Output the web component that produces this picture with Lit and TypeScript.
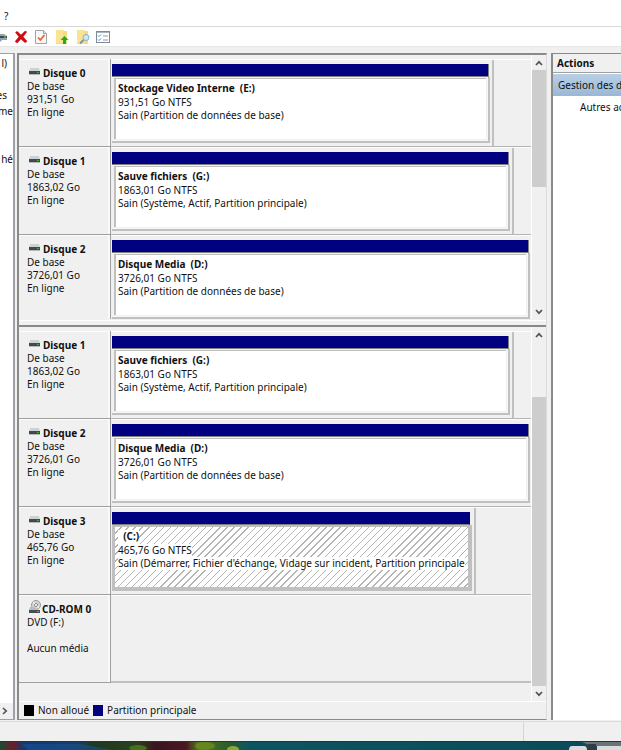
import { LitElement, html, css, svg, nothing } from "lit";
import { customElement, property } from "lit/decorators.js";

interface Disk {
  name: string;
  kind: string;
  size: string;
  state: string;
  optical?: boolean;
  /** share of the graph area taken by the disk, in percent */
  share?: number;
  volume?: string;
  volumeSize?: string;
  health?: string;
  selected?: boolean;
}

const DISKS: Disk[] = [
  { name: "Disque 0", kind: "De base", size: "931,51 Go", state: "En ligne", share: 91.2, volume: "Stockage Video Interne\u00a0 (E:)", volumeSize: "931,51 Go NTFS", health: "Sain (Partition de données de base)" },
  { name: "Disque 1", kind: "De base", size: "1863,02 Go", state: "En ligne", share: 96, volume: "Sauve fichiers\u00a0 (G:)", volumeSize: "1863,01 Go NTFS", health: "Sain (Système, Actif, Partition principale)" },
  { name: "Disque 2", kind: "De base", size: "3726,01 Go", state: "En ligne", share: 100.7, volume: "Disque Media\u00a0 (D:)", volumeSize: "3726,01 Go NTFS", health: "Sain (Partition de données de base)" },
  { name: "Disque 3", kind: "De base", size: "465,76 Go", state: "En ligne", share: 86.9, volume: "\u00a0 (C:)", volumeSize: "465,76 Go NTFS", health: "Sain (Démarrer, Fichier d'échange, Vidage sur incident, Partition principale", selected: true },
  { name: "CD-ROM 0", kind: "DVD (F:)", size: "", state: "Aucun média", optical: true },
];

const driveIcon = (optical: boolean) => svg`
  <svg class="drive" width="13" height="16" viewBox="0 0 13 16" aria-hidden="true">
    ${optical
      ? svg`<circle cx="8" cy="5" r="4.5" fill="#d6d6d6" stroke="#9a9a9a"/><circle cx="8" cy="5" r="1.6" fill="#f4f4f4" stroke="#8a8a8a"/><path d="M5 2.2 7 4M9.2 6.2l2 1.6" stroke="#fff"/>
        <path d="M2 7h4l5 3H1z" fill="#b9bcbe"/><rect x="1" y="10" width="11" height="3" fill="#4a4d50"/><rect x="9" y="11" width="2" height="1" fill="#27d03c"/>`
      : svg`<path d="M2 4h9l1 3H1z" fill="#cfd1d3"/><rect x="1" y="7" width="11" height="3" fill="#45484b"/><rect x="1" y="10" width="11" height="1" fill="#b5b8ba"/><rect x="9" y="8" width="2" height="1" fill="#27c03c"/>`}
  </svg>`;

@customElement("disk-row")
class DiskRow extends LitElement {
  @property({ attribute: false }) disk!: Disk;

  static styles = css`
    :host {
      display: flex;
      flex: none;
      height: 88px;
      line-height: 13px;
    }
    .label {
      flex: none;
      box-sizing: border-box;
      width: 92px;
      padding: 6px 0 0 8px;
      border-right: 1px solid #a0a0a0;
      border-bottom: 1px solid #a0a0a0;
      box-shadow: inset -2px 0 #fafafa, inset 0 1px #fcfcfc;
    }
    .name {
      display: flex;
      align-items: flex-end;
      gap: 2px;
      height: 15px;
      font-weight: bold;
      line-height: 14px;
    }
    .drive {
      flex: none;
      margin-left: 1px;
    }
    .optical .name {
      gap: 1px;
    }
    .line {
      min-height: 13px;
    }
    .graph {
      flex: 1;
      min-width: 0;
      box-sizing: border-box;
      border-top: 1px solid #fcfcfc;
      border-bottom: 1px solid #b4b4b4;
      overflow: hidden;
    }
    .graph.empty {
      border-bottom: 2px solid #c0c0c0;
    }
    .frame {
      box-sizing: border-box;
      display: flex;
      flex-direction: column;
      height: 100%;
      padding: 4px 2px 3px 1px;
      border-right: 2px solid #c0c0c0;
    }
    .bar {
      flex: none;
      height: 12px;
      margin-right: 1px;
      background: #000080;
      border-right: 1px solid #808080;
      border-bottom: 1px solid #808080;
    }
    .volume {
      flex: 1;
      min-height: 0;
      display: flex;
      border: solid #c0c0c0;
      border-width: 0 2px 2px 0;
      padding: 1px 2px 2px 2px;
      box-shadow: inset -1px -1px #f7f7f7;
    }
    .body {
      flex: 1;
      min-width: 0;
      background: #fff;
      border: solid #c0c0c0;
      border-width: 1px 0 0 2px;
      padding: 3px 0 0 2px;
      white-space: nowrap;
      overflow: hidden;
    }
    .body .line {
      width: fit-content;
      height: 13px;
    }
    .body .title {
      font-weight: bold;
      height: 14px;
    }
    .selected .bar {
      border-right-color: #000080;
      margin-right: 2px;
    }
    .selected .volume {
      background: #c0c0c0;
      box-shadow: none;
      padding-top: 2px;
    }
    .selected .body {
      border-width: 0 0 0 1px;
      padding-left: 3px;
      background: #fff repeating-linear-gradient(135deg, #fff 0 4px, #b4b4b4 4px 5px);
    }
    .selected .line {
      background: #fff;
    }
  `;

  render() {
    const d = this.disk;
    return html`
      <div class="label ${d.optical ? "optical" : ""}">
        <div class="name">${driveIcon(!!d.optical)}<span>${d.name}</span></div>
        <div class="line">${d.kind}</div>
        <div class="line">${d.size}</div>
        <div class="line">${d.state}</div>
      </div>
      <div class="graph ${d.volume ? "" : "empty"}">
        ${d.volume
          ? html`<div class="frame ${d.selected ? "selected" : ""}" style="width:${d.share}%">
              <div class="bar"></div>
              <div class="volume">
                <div class="body">
                  <div class="line title">${d.volume}</div>
                  <div class="line">${d.volumeSize}</div>
                  <div class="line">${d.health}</div>
                </div>
              </div>
            </div>`
          : nothing}
      </div>
    `;
  }
}

@customElement("scroll-rail")
class ScrollRail extends LitElement {
  /** thumb start and end, in percent of the track */
  @property({ type: Number }) from = 0;
  @property({ type: Number }) to = 100;

  static styles = css`
    :host {
      flex: none;
      display: flex;
      flex-direction: column;
      width: 14px;
      background: #f0f0f0;
      border-left: 1px solid #fff;
    }
    button {
      flex: none;
      display: grid;
      place-items: center;
      height: 15px;
      padding: 0;
      border: 0;
      background: none;
    }
    .track {
      flex: 1;
      display: flex;
      flex-direction: column;
    }
    .thumb {
      background: #cdcdcd;
    }
  `;

  render() {
    return html`
      <button aria-label="Défiler vers le haut">
        <svg width="8" height="6" viewBox="0 0 8 6"><path d="M1 5 4 1.8 7 5" fill="none" stroke="#555" stroke-width="1.7" /></svg>
      </button>
      <div class="track">
        <div style="flex:${this.from}"></div>
        <div class="thumb" style="flex:${this.to - this.from}"></div>
        <div style="flex:${100 - this.to}"></div>
      </div>
      <button aria-label="Défiler vers le bas">
        <svg width="8" height="6" viewBox="0 0 8 6"><path d="M1 1 4 4.2 7 1" fill="none" stroke="#555" stroke-width="1.7" /></svg>
      </button>
    `;
  }
}

@customElement("app-root")
class AppRoot extends LitElement {
  static styles = css`
    :host {
      display: flex;
      flex-direction: column;
      height: 100vh;
      overflow: hidden;
      background: #f0f0f0;
      color: #111;
      font: 10px/14px "Noto Sans", "Open Sans", sans-serif;
    }
    button {
      padding: 0;
      border: 0;
      background: none;
      color: inherit;
      font: inherit;
    }
    .menu {
      flex: none;
      display: flex;
      align-items: flex-end;
      height: 23px;
      padding: 0 0 3px 4px;
      background: #fff;
      border-bottom: 1px solid #d8d8d8;
    }
    .tools {
      flex: none;
      display: flex;
      align-items: center;
      gap: 6px;
      height: 19px;
      background: #fff;
      border-bottom: 1px solid #e6e6e6;
    }
    .tools button,
    .tools svg {
      display: block;
    }
    .main {
      flex: 1;
      min-height: 0;
      display: flex;
      padding-top: 6px;
    }
    .tree {
      flex: none;
      display: flex;
      flex-direction: column;
      width: 13px;
      background: #fff;
      border: solid #a0a0a8;
      border-width: 1px 2px 1px 0;
      overflow: hidden;
    }
    .items {
      flex: 1;
      display: grid;
      grid-template-columns: minmax(0, 1fr);
      grid-auto-rows: 16px;
      align-content: start;
      padding-top: 1px;
      line-height: 16px;
      white-space: nowrap;
    }
    .item {
      display: flex;
      justify-content: flex-end;
    }
    .item.inset {
      padding-right: 6px;
    }
    .hscroll {
      display: grid;
      place-items: center;
      height: 16px;
      padding-right: 4px;
      background: #f0f0f0;
    }
    .center {
      flex: 1;
      min-width: 0;
      display: flex;
      flex-direction: column;
      margin: 0 4px 0 2px;
      border: solid #8a8a8a;
      border-width: 2px 1px 1px 2px;
      border-right-color: #dcdcdc;
    }
    .view {
      min-height: 0;
      display: flex;
    }
    .view.upper {
      flex: 264;
    }
    .view.lower {
      flex: 373;
    }
    .rows {
      flex: 1;
      min-width: 0;
      display: flex;
      flex-direction: column;
      padding-top: 4px;
      overflow: hidden;
    }
    .divider {
      flex: none;
      height: 4px;
      margin-top: 1px;
      border-top: 1px solid #fff;
      border-bottom: 2px solid #888;
    }
    .legend {
      flex: none;
      display: flex;
      align-items: center;
      gap: 4px;
      height: 16px;
      padding: 0 0 1px 5px;
      border-top: 1px solid #fff;
    }
    .swatch {
      width: 10px;
      height: 11px;
      background: #000;
    }
    .swatch.primary {
      background: #000080;
    }
    .actions {
      flex: none;
      display: flex;
      flex-direction: column;
      width: 68px;
      background: #fff;
      border: solid #8a8a8a;
      border-width: 1px 0 0 2px;
      white-space: nowrap;
      overflow: hidden;
    }
    .actions h2 {
      height: 18px;
      margin: 0;
      padding-left: 4px;
      background: #f0f0f0;
      border-bottom: 1px solid #a0a0a0;
      font: bold 10px/18px "Noto Sans", "Open Sans", sans-serif;
    }
    .actions button {
      height: 22px;
      text-align: left;
    }
    .actions .group {
      padding-left: 5px;
      margin-top: 1px;
      background: linear-gradient(#b8cfe6, #9bb7d6);
    }
    .actions .more {
      padding-left: 27px;
    }
    .status {
      flex: none;
      display: flex;
      justify-content: flex-end;
      height: 19px;
      margin-top: 1px;
      border-top: 1px solid #dcdcdc;
    }
    .cell {
      width: 97px;
      border-left: 1px solid #d4d4d4;
    }
    .desktop {
      flex: none;
      display: block;
      width: 100%;
      height: 9px;
    }
  `;

  render() {
    return html`
      <nav class="menu"><button>?</button></nav>
      <div class="tools">
        <button aria-label="Disque">
          <svg width="8" height="14" viewBox="0 0 8 14"><path d="M0 4h4l3 2v4H0z" fill="#9aa4a8" /><path d="M0 6h7v2H0z" fill="#40484c" /><path d="M4 6h2v2H4z" fill="#35b548" /><path d="m0 8 2 2-2 2z" fill="#6da0cf" /></svg>
        </button>
        <button aria-label="Supprimer">
          <svg width="14" height="14" viewBox="0 0 14 14"><path d="M1.2 2.6Q3 .4 4.2 2L7 4.8 10.6 1.2Q12 .4 13 2L9.3 6.8l3.8 4.2q-.6 2.4-2.6 1.6L7 9.2l-3.5 3.7Q1.4 13 1 11.2l3.7-4.4z" fill="#d20a11" /></svg>
        </button>
        <button aria-label="Propriétés">
          <svg width="14" height="16" viewBox="0 0 14 16"><path d="M1.5 1.5h8l3 3v10h-11z" fill="#f7f8fa" stroke="#a0a4aa" /><path d="M9.5 1.5v3h3" fill="#ddd" stroke="#a0a4aa" /><path d="m4 8.5 2.3 2.5L10.500 6" fill="none" stroke="#f0602a" stroke-width="1.8" /></svg>
        </button>
        <button aria-label="Dossier parent">
          <svg width="15" height="16" viewBox="0 0 15 16"><path d="M2 1h7l1 1h3v13H2z" fill="#f8dc7c" /><path d="M2 1h7v13H2z" fill="#fbe59a" opacity=".7" /><path d="m10.500 7 4 4H12v4H9v-4H6.500z" fill="#23ab22" /></svg>
        </button>
        <button aria-label="Rechercher">
          <svg width="15" height="16" viewBox="0 0 15 16"><path d="M2 1h7l1 1h3v13H2z" fill="#f8dc7c" /><path d="M2 1h7v13H2z" fill="#fbe59a" opacity=".7" /><circle cx="11" cy="8.500" r="3" fill="#cfe6f6" stroke="#86aecb" /><path d="M8.500 11 5 14.500" stroke="#7893a8" stroke-width="1.8" /></svg>
        </button>
        <button aria-label="Liste">
          <svg width="14" height="12" viewBox="0 0 14 12"><rect x=".5" y=".5" width="13" height="11" fill="#fff" stroke="#7f8a96" /><path d="M1 1.5h12" stroke="#aab4bf" /><path d="m2 4.500 1 1 2-2m-3 5 1 1 2-2" fill="none" stroke="#3d8fd8" /><path d="M7 5h5M7 9h5" stroke="#8f98a2" /></svg>
        </button>
      </div>
      <main class="main">
        <section class="tree">
          <div class="items">
            <div class="item inset">l)</div>
            <div class="item"></div>
            <div class="item inset">es</div>
            <div class="item">me</div>
            <div class="item"></div>
            <div class="item"></div>
            <div class="item">hé</div>
          </div>
          <button class="hscroll" aria-label="Défiler vers la droite">
            <svg width="6" height="8" viewBox="0 0 6 8"><path d="M1 1 4.2 4 1 7" fill="none" stroke="#555" stroke-width="1.7" /></svg>
          </button>
        </section>
        <section class="center">
          <div class="view upper">
            <div class="rows">${DISKS.slice(0, 3).map((d) => html`<disk-row .disk=${d}></disk-row>`)}</div>
            <scroll-rail from="0" to="50"></scroll-rail>
          </div>
          <div class="divider"></div>
          <div class="view lower">
            <div class="rows">${DISKS.slice(1).map((d) => html`<disk-row .disk=${d}></disk-row>`)}</div>
            <scroll-rail from="16" to="100"></scroll-rail>
          </div>
          <div class="legend">
            <span class="swatch"></span><span>Non alloué</span>
            <span class="swatch primary"></span><span>Partition principale</span>
          </div>
        </section>
        <aside class="actions">
          <h2>Actions</h2>
          <button class="group">Gestion des d</button>
          <button class="more">Autres ac</button>
        </aside>
      </main>
      <footer class="status"><div class="cell"></div></footer>
      <svg class="desktop" viewBox="0 0 621 9" preserveAspectRatio="none" aria-hidden="true">
        <defs>
          <linearGradient id="sea">
            <stop offset="0" stop-color="#1c4a34" /><stop offset=".02" stop-color="#6a1f2c" /><stop offset=".04" stop-color="#123a70" />
            <stop offset=".12" stop-color="#163f68" /><stop offset=".15" stop-color="#1d3a22" /><stop offset=".22" stop-color="#2c401c" />
            <stop offset=".25" stop-color="#3a1420" /><stop offset=".3" stop-color="#4a1824" /><stop offset=".32" stop-color="#4f7a1c" />
            <stop offset=".37" stop-color="#2c5a2c" /><stop offset=".4" stop-color="#0c5560" /><stop offset="1" stop-color="#0b4a58" />
          </linearGradient>
        </defs>
        <rect width="621" height="9" fill="url(#sea)" />
        <path d="M22 3h60l30 6H28z" fill="#1b4f9c" opacity=".5" />
        <ellipse cx="138" cy="7" rx="9" ry="3" fill="#4e7d20" opacity=".8" /><ellipse cx="205" cy="5" rx="10" ry="4" fill="#6c8a20" opacity=".8" /><ellipse cx="233" cy="8" rx="6" ry="3" fill="#8aa63a" />
        <path d="M569 9q0-4 3-4h12q3 0 3 4zM597 9V5h24v4z" fill="#d9dcdc" /><path d="M582 1h39v4h-30z" fill="#6a7478" /><path d="M588 3h8v6h-8z" fill="#333c40" />
        <rect width="621" height="1" fill="#2a3436" />
      </svg>
    `;
  }
}
